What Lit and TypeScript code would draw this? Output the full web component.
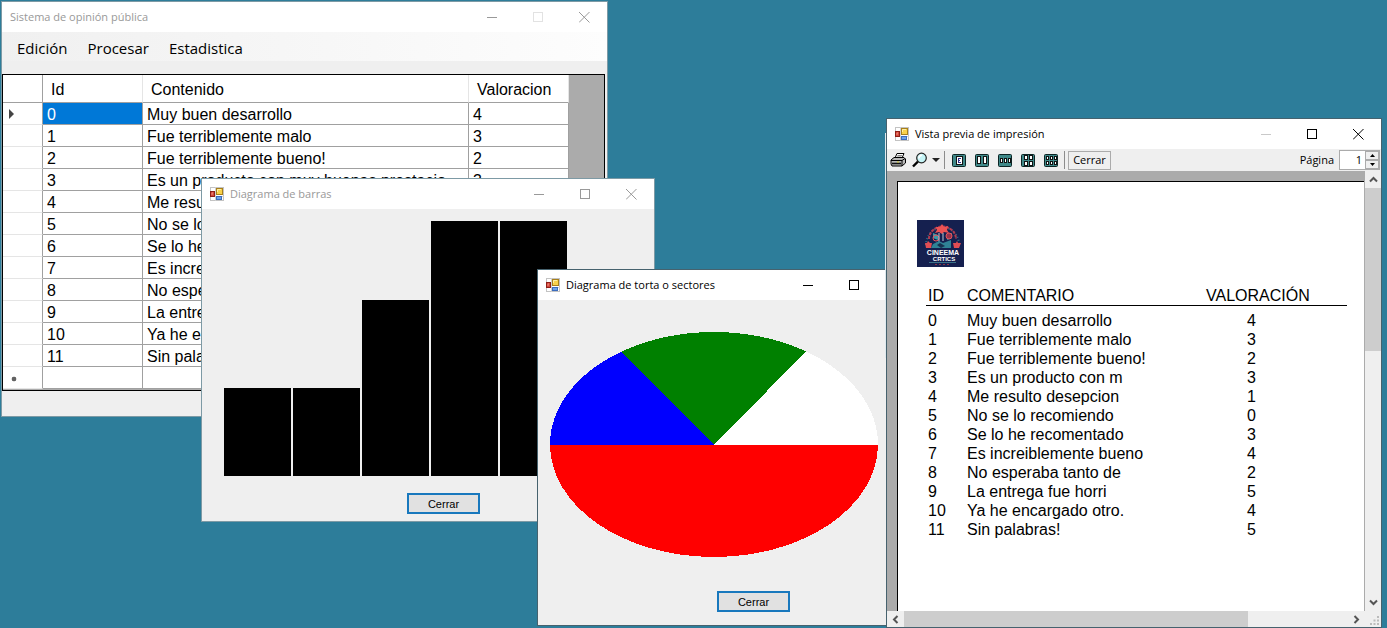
import { LitElement, html, svg, css, nothing } from "lit";
import { customElement, property } from "lit/decorators.js";

interface Opinion { id: number; full: string; printed: string; score: number; }

const OPINIONS: Opinion[] = [
  { id: 0, full: "Muy buen desarrollo", printed: "Muy buen desarrollo", score: 4 },
  { id: 1, full: "Fue terriblemente malo", printed: "Fue terriblemente malo", score: 3 },
  { id: 2, full: "Fue terriblemente bueno!", printed: "Fue terriblemente bueno!", score: 2 },
  { id: 3, full: "Es un producto con muy buenas prestacio", printed: "Es un producto con m", score: 3 },
  { id: 4, full: "Me resulto desepcion", printed: "Me resulto desepcion", score: 1 },
  { id: 5, full: "No se lo recomiendo", printed: "No se lo recomiendo", score: 0 },
  { id: 6, full: "Se lo he recomentado", printed: "Se lo he recomentado", score: 3 },
  { id: 7, full: "Es increiblemente bueno", printed: "Es increiblemente bueno", score: 4 },
  { id: 8, full: "No esperaba tanto de", printed: "No esperaba tanto de", score: 2 },
  { id: 9, full: "La entrega fue horri", printed: "La entrega fue horri", score: 5 },
  { id: 10, full: "Ya he encargado otro.", printed: "Ya he encargado otro.", score: 4 },
  { id: 11, full: "Sin palabras!", printed: "Sin palabras!", score: 5 },
];

/** Top-level window chrome: caption, window buttons and a content slot. */
@customElement("desk-window")
export class DeskWindow extends LitElement {
  @property() caption = "";
  @property({ type: Boolean }) icon = false;
  @property({ type: Boolean }) inactive = false;
  @property({ attribute: "dim" }) dim = "";

  static styles = css`
    :host { display: flex; flex-direction: column; box-sizing: border-box; background: #efefef; outline: 1px solid #46626e; color: #000; }
    :host([inactive]) { color: #999; outline-color: #7d9aa5; }
    .caption { display: flex; align-items: center; height: 30px; flex: none; background: #fff; padding-left: 8px; }
    .icon { width: 14px; height: 14px; margin-right: 6px; flex: none; }
    .text { flex: 1; font: 11px/16px "Open Sans", "Noto Sans", sans-serif; white-space: nowrap; }
    .btn { width: 46px; height: 30px; padding: 0; border: 0; background: none; color: inherit; display: grid; place-items: center; }
    .btn svg { width: 11px; height: 11px; display: block; }
    .faint { color: #e2e2e2; }
    .soft { color: #c9c9c9; }
    .body { flex: 1; min-height: 0; display: flex; flex-direction: column; color: #000; }
  `;

  render() {
    const min = this.dim === "min" ? "btn soft" : "btn";
    const max = this.dim === "max" ? "btn faint" : "btn";
    return html`
      <header class="caption">
        ${this.icon
          ? html`<svg class="icon" viewBox="0 0 14 14" aria-hidden="true">
              <rect x="0.5" y="0.5" width="13" height="13" fill="#fff" stroke="#c3c3c3" />
              <path d="M5.5 0V14M0 9.5H14" stroke="#d0d0d0" />
              <rect x="6.5" y="1.5" width="6" height="6" fill="#f9d24b" stroke="#a8801c" />
              <path d="M7.5 5V2.5H11" stroke="#fdeea6" fill="none" />
              <rect x="0.5" y="4.5" width="4" height="5" fill="#d4473a" stroke="#8e1f18" />
              <path d="M2 8V6H3" stroke="#ee8f80" fill="none" />
              <rect x="6.5" y="9.5" width="5" height="3" fill="#6ea3e8" stroke="#3c6dbe" />
            </svg>`
          : nothing}
        <span class="text">${this.caption}</span>
        <button class=${min} aria-label="Minimizar"><svg viewBox="0 0 11 11"><path d="M0 5.5H10" stroke="currentColor" /></svg></button>
        <button class=${max} aria-label="Maximizar"><svg viewBox="0 0 11 11"><rect x="0.5" y="0.5" width="9" height="9" fill="none" stroke="currentColor" /></svg></button>
        <button class="btn" aria-label="Cerrar"><svg viewBox="0 0 11 11"><path d="M0 0L10.5 10.5M10.5 0L0 10.5" stroke="currentColor" /></svg></button>
      </header>
      <div class="body"><slot></slot></div>
    `;
  }
}

/** Editable grid with the list of opinions. */
@customElement("opinion-grid")
export class OpinionGrid extends LitElement {
  static styles = css`
    :host { display: block; background: #ababab; border: 1px solid #000; font: 16px/18px "Liberation Sans", Arial, sans-serif; overflow: hidden; }
    table { table-layout: fixed; width: 566px; border-collapse: separate; border-spacing: 0; background: #fff; }
    .c-head { width: 40px; }
    .c-id { width: 100px; }
    .c-score { width: 100px; }
    th, td { box-sizing: border-box; height: 22px; padding: 2px 4px 0; border-right: 1px solid #a0a0a0; border-bottom: 1px solid #a0a0a0; font-weight: 400; text-align: left; white-space: nowrap; overflow: hidden; }
    thead th { height: 28px; padding: 2px 8px 0; border-right-color: #e5e5e5; }
    thead .corner { border-right-color: #a0a0a0; }
    .marker { padding: 0 0 0 5px; border-bottom-color: #e5e5e5; }
    .marker svg { display: block; width: 10px; height: 10px; }
    .current { background: #0078d7; color: #fff; }
  `;

  render() {
    return html`
      <table>
        <colgroup><col class="c-head" /><col class="c-id" /><col /><col class="c-score" /></colgroup>
        <thead>
          <tr><th class="corner"></th><th scope="col">Id</th><th scope="col">Contenido</th><th scope="col">Valoracion</th></tr>
        </thead>
        <tbody>
          ${OPINIONS.map((o, i) => html`<tr>
            <td class="marker">${i === 0 ? html`<svg viewBox="0 0 10 10"><path d="M1 0L6 5L1 10Z" fill="#444" /></svg>` : nothing}</td>
            <td class=${i === 0 ? "current" : ""}>${o.id}</td>
            <td>${o.full}</td>
            <td>${o.score}</td>
          </tr>`)}
          <tr>
            <td class="marker"><svg viewBox="0 0 10 10"><circle cx="6" cy="6" r="2" fill="#444" /><path d="M3.5 6H8.5M6 3.5V8.5M4 4L8 8M8 4L4 8" stroke="#666" stroke-width=".8" /></svg></td>
            <td></td><td></td><td></td>
          </tr>
        </tbody>
      </table>
    `;
  }
}

/** Bar chart of the scores. */
@customElement("bar-chart")
export class BarChart extends LitElement {
  @property({ attribute: false }) values: number[] = [];

  static styles = css`
    :host { display: flex; align-items: flex-end; gap: 2px; }
    .bar { width: 67px; background: #000; }
  `;

  render() {
    return this.values.map((v) => html`<div class="bar" style="height:${v}px"></div>`);
  }
}

/** Pie chart drawn on an ellipse; slices are fractions of a turn, counter-clockwise. */
@customElement("pie-chart")
export class PieChart extends LitElement {
  @property({ attribute: false }) slices: { share: number; color: string }[] = [];

  static styles = css`
    :host { display: block; }
    svg { display: block; width: 100%; height: auto; shape-rendering: crispEdges; }
  `;

  render() {
    const rx = 164, ry = 112.5;
    let turn = 0;
    const point = (t: number) => {
      const a = t * Math.PI * 2;
      return `${rx + rx * Math.cos(a)} ${ry - ry * Math.sin(a)}`;
    };
    return html`<svg viewBox="0 0 328 225" role="img" aria-label="Diagrama de torta">
      ${this.slices.map((s) => {
        const from = point(turn);
        turn += s.share;
        return svg`<path fill=${s.color} d="M${rx} ${ry}L${from}A${rx} ${ry} 0 0 0 ${point(turn)}Z" />`;
      })}
    </svg>`;
  }
}

/** Printed report page. */
@customElement("report-page")
export class ReportPage extends LitElement {
  static styles = css`
    :host { display: block; box-sizing: border-box; background: #fff; border: solid #000; border-width: 1px 0 0 1px; padding: 38px 17px 0 19px; font: 16px/19px "Liberation Sans", Arial, sans-serif; }
    .logo { display: block; width: 47px; height: 47px; }
    .brand { font: 700 7px "Liberation Sans", Arial, sans-serif; fill: #fff; text-anchor: middle; }
    .brand-low { font-size: 6px; }
    table { border-collapse: separate; border-spacing: 0; table-layout: fixed; width: calc(100% - 9px); margin: 18px 0 0 9px; }
    th, td { padding: 0; font-weight: 400; text-align: left; height: 19px; white-space: nowrap; }
    th { border-bottom: 1px solid #000; height: 20px; }
    th:first-child, td:first-child { padding-left: 2px; }
    tbody::before { content: ""; display: block; height: 5px; }
    .c-id { width: 41px; }
    .c-text { width: 239px; }
    .num { padding-left: 41px; }
  `;

  render() {
    return html`
      <svg class="logo" viewBox="0 0 47 47" role="img" aria-label="Cineema Crtics">
        <rect width="47" height="47" fill="#15204f" />
        <path d="M9 25A15 16 0 0 1 42 25" fill="none" stroke="#2e6f86" stroke-width="2" stroke-dasharray="1 2" />
        <path d="M12 19A13 12 0 0 1 39 19" fill="none" stroke="#b23a4e" stroke-width="2" stroke-dasharray="3 1" />
        <path d="M23 7L25 4L27 7L31 6L30 10L32 13L27 12L25 14L22 12L18 13L20 10L19 7Z" fill="#ec5354" />
        <path d="M16 13L21 15V20L16 18ZM35 13L30 15V20L35 18Z" fill="#3b99a8" />
        <circle cx="19" cy="18" r="3" fill="none" stroke="#e4535a" />
        <circle cx="32" cy="16" r="3" fill="#98334c" stroke="#e4535a" />
        <path d="M22 13V24M26 13V21" stroke="#bcc8d6" />
        <path d="M16 24L22 21L26 23L34 20V28H14Z" fill="#2f8295" />
        <path d="M11 21L13 23L15 23L14 28H9L8 23L10 23ZM40 21L41 23L44 23L42 28H37L36 23L39 23Z" fill="#e24d53" />
        <path d="M20 25L23 23L28 26L24 28Z" fill="#17304f" />
        <text class="brand" x="26" y="35">CINEEMA</text>
        <text class="brand brand-low" x="27" y="41">CRTICS</text>
        <path d="M12 42.5H39" stroke="#3b7389" />
        <path d="M18 44.5H34" stroke="#8b3448" stroke-dasharray="2 2" />
      </svg>
      <table>
        <colgroup><col class="c-id" /><col class="c-text" /><col /></colgroup>
        <thead><tr><th scope="col">ID</th><th scope="col">COMENTARIO</th><th scope="col">VALORACIÓN</th></tr></thead>
        <tbody>
          ${OPINIONS.map((o) => html`<tr><td>${o.id}</td><td>${o.printed}</td><td class="num">${o.score}</td></tr>`)}
        </tbody>
      </table>
    `;
  }
}

/** Print preview: tool strip, page canvas and scroll bars. */
@customElement("print-preview")
export class PrintPreview extends LitElement {
  static styles = css`
    :host { display: flex; flex-direction: column; flex: 1; min-height: 0; font: 11px/16px "Open Sans", "Noto Sans", sans-serif; }
    button { padding: 0; border: 0; background: none; font: inherit; color: inherit; }
    .tools { display: flex; align-items: center; height: 22px; flex: none; padding: 0 1px 0 3px; }
    .tool { display: block; }
    .tool svg { display: block; width: 16px; height: 16px; }
    .zoom { margin-left: 6px; display: flex; align-items: center; gap: 4px; }
    .tool .arrow { width: 8px; height: 4px; }
    .bar { width: 1px; height: 18px; background: #8c8c8c; margin: 0 6px 0 4px; }
    .layouts { display: flex; gap: 7px; }
    .bar.end { margin: 0 3px 0 5px; }
    .close { border: 1px solid #ababab; height: 19px; width: 43px; line-height: 16px; }
    .page { margin-left: auto; display: flex; align-items: center; gap: 5px; }
    .spin { display: flex; box-sizing: border-box; width: 41px; height: 20px; background: #fff; border: 1px solid #ababab; }
    .spin input { width: 22px; padding: 0; border: 0; font: inherit; text-align: right; background: none; }
    .steps { display: flex; flex-direction: column; margin: 0 0 0 3px; }
    .steps button { display: grid; place-items: center; width: 14px; height: 9px; box-sizing: border-box; background: #efefef; border: 1px solid #ababab; }
    .steps svg { width: 5px; height: 3px; display: block; }
    .view { display: grid; grid-template-columns: 1fr 16px; grid-template-rows: 1fr 16px; flex: 1; min-height: 0; }
    .canvas { background: #ababab; padding: 10px 1px 0 10px; display: grid; min-height: 0; overflow: hidden; }
    .vbar, .hbar { display: flex; align-items: center; background: #efefef; }
    .vbar { flex-direction: column; }
    .step { width: 17px; height: 17px; display: grid; place-items: center; flex: none; }
    .step svg { width: 9px; height: 9px; display: block; fill: none; stroke: #555; stroke-width: 2; }
    .vthumb { width: 16px; height: 37%; background: #cdcdcd; }
    .hthumb { height: 16px; width: 72%; background: #cdcdcd; }
    .track { flex: 1; align-self: stretch; }
    .grip { background: #efefef; display: grid; place-items: end; padding: 0 2px 2px 0; }
    .grip svg { width: 9px; height: 9px; display: block; }
  `;

  private layoutIcon(label: string, cells: number[][]) {
    return html`<button class="tool" aria-label=${label}>
      <svg viewBox="0 0 16 16">
        <rect x="1.5" y="2.5" width="13" height="12" rx="1" fill="#3f8888" stroke="#0c2424" />
        ${cells.map(([x, y, w, h]) => svg`<rect x=${x} y=${y} width=${w} height=${h} fill="#fff" stroke="#111" />`)}
        ${cells.length === 1 ? svg`<path d="M7 6.5H10M7 8.5H9M7 10.5H10M7.5 6V11" stroke="#33338c" />` : nothing}
      </svg>
    </button>`;
  }

  private chevron(d: string, label: string) {
    return html`<button class="step" aria-label=${label}><svg viewBox="0 0 9 9"><path d=${d} /></svg></button>`;
  }

  render() {
    return html`
      <div class="tools">
        <button class="tool" aria-label="Imprimir">
          <svg viewBox="0 0 16 16">
            <path d="M5 6L7 1.5H14L12 6" fill="#fff" stroke="#000" />
            <path d="M7.5 3.5H12M7 5H11.5" stroke="#666" stroke-width=".8" />
            <path d="M1 8L4 5.5H14L15.5 7V11L12 14H2L1 12Z" fill="#b9b9b9" stroke="#000" />
            <path d="M1 8.5H12L15 6.5M12 8.5V14" fill="none" stroke="#000" />
            <path d="M2 11.5H11" stroke="#111" stroke-width="1.6" />
            <path d="M7 10H9" stroke="#c9c52a" />
          </svg>
        </button>
        <button class="tool zoom" aria-label="Zoom">
          <svg viewBox="0 0 16 16">
            <path d="M1 14.5L6 9.5" stroke="#000" stroke-width="2.4" />
            <circle cx="9.5" cy="6" r="4.8" fill="#c6f5f7" stroke="#222" stroke-width="1.2" />
            <path d="M6.8 6.5Q7 3.5 10 3.3" fill="none" stroke="#fff" stroke-width="1.5" />
          </svg>
          <svg class="arrow" viewBox="0 0 8 4"><path d="M0 0H8L4 4Z" fill="#222" /></svg>
        </button>
        <span class="bar"></span>
        <div class="layouts">
          ${this.layoutIcon("Una página", [[5.5, 4.5, 6, 8]])}
          ${this.layoutIcon("Dos páginas", [[3.5, 4.5, 3, 7], [9.5, 4.5, 3, 7]])}
          ${this.layoutIcon("Tres páginas", [[3.5, 6.5, 2, 4], [7.5, 6.5, 2, 4], [11.5, 6.5, 2, 4]])}
          ${this.layoutIcon("Cuatro páginas", [[4.5, 3.5, 3, 4], [9.5, 3.5, 3, 4], [4.5, 9.5, 3, 4], [9.5, 9.5, 3, 4]])}
          ${this.layoutIcon("Seis páginas", [[3.5, 4.5, 2, 3], [7.5, 4.5, 2, 3], [11.5, 4.5, 2, 3], [3.5, 9.5, 2, 3], [7.5, 9.5, 2, 3], [11.5, 9.5, 2, 3]])}
        </div>
        <span class="bar end"></span>
        <button class="close">Cerrar</button>
        <div class="page">
          <label for="page">Página</label>
          <div class="spin">
            <input id="page" type="text" .value=${"1"} />
            <div class="steps">
              <button aria-label="Siguiente"><svg viewBox="0 0 5 3"><path d="M0 3H5L2.5 0Z" /></svg></button>
              <button aria-label="Anterior"><svg viewBox="0 0 5 3"><path d="M0 0H5L2.5 3Z" /></svg></button>
            </div>
          </div>
        </div>
      </div>
      <div class="view">
        <div class="canvas"><report-page></report-page></div>
        <div class="vbar">
          ${this.chevron("M1 6.5L4.5 3L8 6.5", "Arriba")}
          <div class="vthumb"></div><div class="track"></div>
          ${this.chevron("M1 2.5L4.5 6L8 2.5", "Abajo")}
        </div>
        <div class="hbar">
          ${this.chevron("M6.5 1L3 4.5L6.5 8", "Izquierda")}
          <div class="hthumb"></div><div class="track"></div>
          ${this.chevron("M2.5 1L6 4.5L2.5 8", "Derecha")}
        </div>
        <div class="grip"><svg viewBox="0 0 9 9"><path d="M7 0h2v2h-2zM3.5 3.5h2v2h-2zM7 3.5h2v2h-2zM0 7h2v2h-2zM3.5 7h2v2h-2zM7 7h2v2h-2z" fill="#bbb" /></svg></div>
      </div>
    `;
  }
}

@customElement("app-root")
export class AppRoot extends LitElement {
  static styles = css`
    :host { display: block; position: relative; min-height: 100vh; background: #2d7d9a; overflow: hidden; }
    desk-window, .sheet { position: absolute; }
    .main { left: 2px; top: 2px; width: 605px; height: 414px; }
    .bars { left: 202px; top: 179px; width: 452px; height: 342px; }
    .pie { left: 538px; top: 270px; width: 385px; height: 355px; }
    .preview { left: 887px; top: 119px; width: 494px; height: 508px; }
    .sheet { left: 885px; top: 133px; width: 40px; height: 225px; background: #dfe9ee; }
    .menu { display: flex; height: 29px; align-items: center; padding-left: 10px; background: linear-gradient(90deg, #f0f0f0, #fdfdfd); font: 15px/20px "Open Sans", "Noto Sans", sans-serif; flex: none; }
    .menu button { border: 0; background: none; padding: 2px 5px 0; margin-right: 10px; font: inherit; color: #000; }
    opinion-grid { margin: 13px 2px 25px 0; flex: 1; }
    bar-chart { height: 267px; padding-left: 22px; }
    pie-chart { width: 328px; margin: 32px 0 0 12px; }
    .accept { box-sizing: border-box; width: 73px; height: 21px; padding: 0; border: 2px solid #1878bd; background: #e1e1e1; color: #000; font: 11px/16px "Liberation Sans", Arial, sans-serif; }
    .bars .accept { margin: 17px 0 0 205px; }
    .pie .accept { margin: 34px 0 0 179px; }
  `;

  render() {
    return html`
      <desk-window class="main" caption="Sistema de opinión pública" inactive dim="max">
        <nav class="menu"><button>Edición</button><button>Procesar</button><button>Estadistica</button></nav>
        <opinion-grid></opinion-grid>
      </desk-window>
      <desk-window class="bars" caption="Diagrama de barras" icon inactive>
        <bar-chart .values=${[88, 88, 176, 255, 255]}></bar-chart>
        <button class="accept">Cerrar</button>
      </desk-window>
      <desk-window class="pie" caption="Diagrama de torta o sectores" icon>
        <pie-chart .slices=${[
          { share: 0.155, color: "#fff" },
          { share: 0.191, color: "#008000" },
          { share: 0.154, color: "#00f" },
          { share: 0.5, color: "#f00" },
        ]}></pie-chart>
        <button class="accept">Cerrar</button>
      </desk-window>
      <div class="sheet"></div>
      <desk-window class="preview" caption="Vista previa de impresión" icon dim="min">
        <print-preview></print-preview>
      </desk-window>
    `;
  }
}
